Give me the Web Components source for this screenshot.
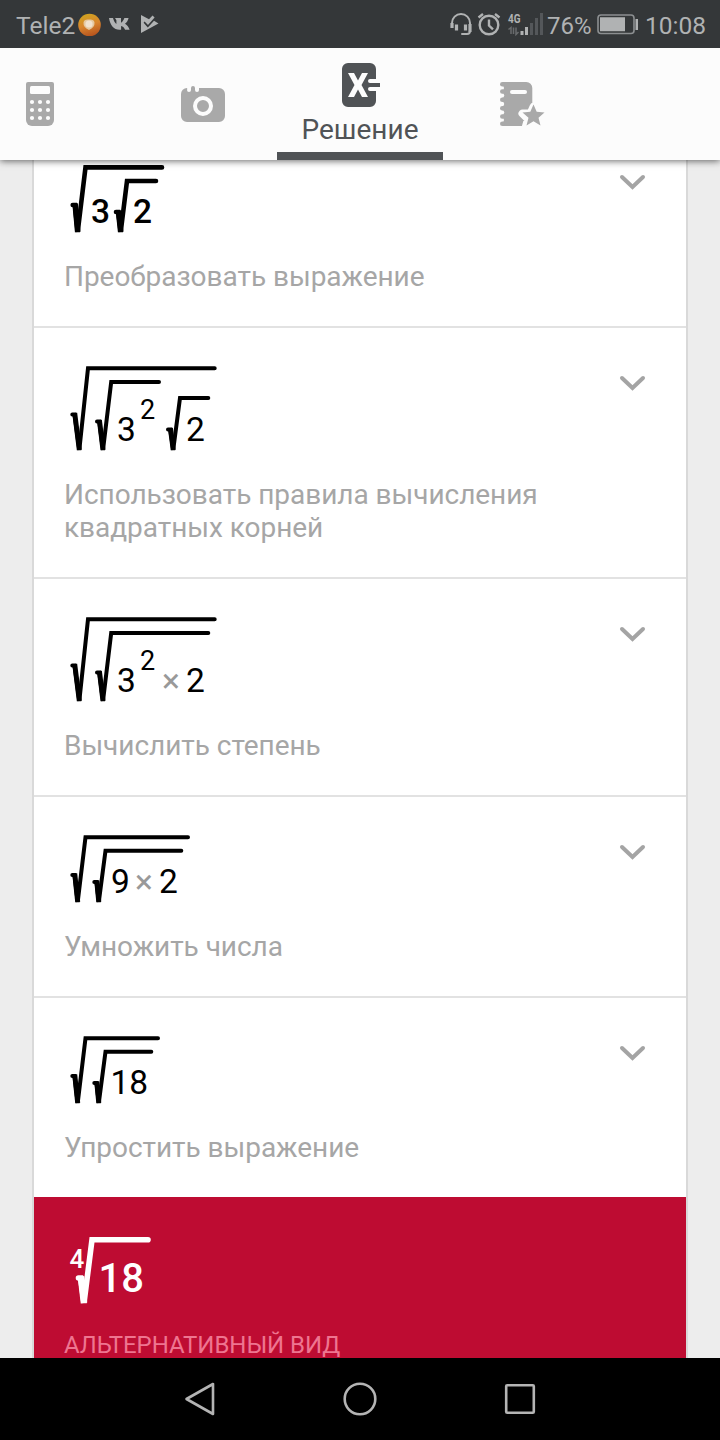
<!DOCTYPE html>
<html lang="ru">
<head>
<meta charset="utf-8">
<title>Решение</title>
<style>
  html, body {
    margin: 0;
    height: 100%;
    overflow: hidden;
  }
  body {
    font-family: Roboto, "Noto Sans", sans-serif;
    background: #ededed;
  }
</style>
</head>
<body>
<solver-app></solver-app>

<script>
class StatusBar extends HTMLElement {
  constructor() {
    super();
    this.attachShadow({ mode: 'open' });
  }

  connectedCallback() {
    this.shadowRoot.innerHTML = `
      <style>
        :host {
          display: flex;
          align-items: center;
          box-sizing: border-box;
          height: 48px;
          padding: 0 15px 0 16px;
          position: relative;
          z-index: 3;
          background: #343739;
          color: #b0b2b3;
          font-size: 24px;
          line-height: 48px;
        }
        svg { display: block; flex: none; }
        span { flex: none; white-space: nowrap; padding-top: 3px; }
        .carrier { width: 61px; font-size: 24.5px; }
        .vk { margin-left: 8px; }
        .play { margin-left: 11px; }
        .alarm { margin-left: 5px; }
        .signal { margin-left: 6px; }
        .percent { width: 47px; margin-left: 3px; }
        .battery { margin-left: 3px; }
        .right { display: flex; align-items: center; margin-left: auto; width: 255px; }
        .time { margin-left: 6px; font-size: 24.5px; }
      </style>
      <span class="carrier">Tele2</span>
      <svg width="24" height="24" viewBox="0 0 24 24">
        <defs>
          <linearGradient id="ball" x1="0.3" y1="0" x2="0.6" y2="1">
            <stop offset="0" stop-color="#cfa41f"/>
            <stop offset="0.5" stop-color="#d9852e"/>
            <stop offset="1" stop-color="#b5521d"/>
          </linearGradient>
        </defs>
        <circle cx="12.500" cy="13" r="11.300" fill="url(#ball)"/>
        <path d="M12 18 Q6 15 6.500 10.500 Q7 7 12 7.500 Q17 7 17.500 10.500 Q18 15 12 18Z" fill="#e5c8a0"/>
        <circle cx="12" cy="12" r="3.600" fill="#f1e2cf"/>
      </svg>
      <svg class="vk" width="21" height="14" viewBox="0 0 21 14">
        <path d="M0 1h4c.8 3 2 5 3.400 6V3.200L6 1h6v4.800C13.500 5 14.600 3 15.400 1h4.200c-.6 2.600-2 4.500-3.600 5.800 1.800 1 3.700 3.200 4.600 5.900h-4.500c-.8-2-2-3.400-4-3.800v3.800h-1.700C5 12.700 1.200 8.500 0 1z" fill="#b0b2b3"/>
      </svg>
      <svg class="play" width="18" height="20" viewBox="0 0 18 20">
        <path d="M0 1 L8 5.200 L11.500 1.500 L13.600 3.600 L7 11 L3.600 7.500 L2.600 8.800 L6.800 13.500 L13 6.800 L17.500 9.500 L0 19Z" fill="#b0b2b3"/>
      </svg>
      <div class="right">
        <svg width="22" height="24" viewBox="0 0 22 24" fill="none" stroke="#b0b2b3" stroke-width="2">
          <path d="M2 15V11a9 9 0 0 1 18 0v8a3 3 0 0 1-3 3h-5" stroke-linecap="round"/>
          <path d="M2 11v5M6.500 12.500v6M15.500 12.500v6M20 12v8" stroke-width="3.200"/>
        </svg>
        <svg class="alarm" width="24" height="24" viewBox="0 0 24 24" fill="none" stroke="#b0b2b3" stroke-width="2.400">
          <circle cx="12" cy="13" r="9.300"/>
          <path d="M12 7.500v6l4 3.800M1.500 5.500 6 2M22.500 5.500 18 2"/>
        </svg>
        <svg class="signal" width="37" height="24" viewBox="0 0 37 24">
          <text x="1" y="11" font-size="13" font-weight="700" fill="#b0b2b3" textLength="12.500" lengthAdjust="spacingAndGlyphs">4G</text>
          <path d="M1.500 17.500 4 15.500V22M6.500 15.500V22M9 15.500V22.500L11.500 20" fill="none" stroke="#686b6d" stroke-width="1.500"/>
          <path d="M13.500 19h3v4h-3zM18 15h3v8h-3z" fill="#b0b2b3"/>
          <path d="M23 11h3v12h-3zM28 6h3v17h-3zM33 1h3v22h-3z" fill="#54575a"/>
        </svg>
        <span class="percent">76%</span>
        <svg class="battery" width="42" height="22" viewBox="0 0 42 22">
          <rect x="1" y="2" width="36" height="18.500" rx="3" fill="none" stroke="#8c8f91" stroke-width="1.600"/>
          <path d="M3 4.200h25v14H3zM38.500 6h2.500v11h-2.500z" fill="#b0b2b3"/>
        </svg>
        <span class="time">10:08</span>
      </div>
    `;
  }
}

class TabBar extends HTMLElement {
  constructor() {
    super();
    this.attachShadow({ mode: 'open' });
  }

  connectedCallback() {
    this.shadowRoot.innerHTML = `
      <style>
        :host {
          display: flex;
          height: 112px;
          position: relative;
          z-index: 2;
          background: #fcfcfc;
          box-shadow: 0 1px 7px rgba(0, 0, 0, 0.6);
        }
        ::slotted(tab-item) { flex: none; }
      </style>
      <slot></slot>
    `;
  }
}

class TabItem extends HTMLElement {
  constructor() {
    super();
    this.attachShadow({ mode: 'open' });
  }

  connectedCallback() {
    this.shadowRoot.innerHTML = `
      <style>
        :host {
          display: flex;
          flex-direction: column;
          align-items: center;
          justify-content: center;
          box-sizing: border-box;
          height: 112px;
          color: #a9a9a9;
        }
        :host([active]) {
          justify-content: flex-start;
          padding-top: 14px;
          border-bottom: 8px solid #505356;
          color: #505356;
          font-size: 28px;
          line-height: 34px;
        }
        ::slotted(svg) { display: block; }
        ::slotted(span) { margin-top: 5px; white-space: nowrap; }
      </style>
      <slot></slot>
    `;
  }
}

// Draws nested radicals. A root is [hookX, hookY, bottomX, bottomY, topX, topY, endX],
// a text is [string, x, baseline, size, fill].
class MathFormula extends HTMLElement {
  constructor() {
    super();
    this.attachShadow({ mode: 'open' });
  }

  set data(value) {
    this._data = value;
    this._render();
  }

  _root([hx, hy, bx, by, tx, ty, ex]) {
    // the short downstroke is heavier than the rest of the sign
    return `
      <path d="M${hx} ${hy}h2.200L${bx} ${by}L${tx} ${ty}H${ex}"/>
      <path class="down" d="M${hx + 2.4} ${hy - 1.5}L${bx} ${by}"/>
    `;
  }

  _render() {
    const { height, stroke = 4, weight = 400, roots, texts } = this._data;
    this.shadowRoot.innerHTML = `
      <style>
        :host { display: block; height: ${height}px; }
        svg { display: block; overflow: visible; }
        path { fill: none; stroke: currentColor; stroke-width: ${stroke}; stroke-linecap: round; }
        .down { stroke-width: ${stroke + 1}; stroke-linecap: butt; }
        text { font-weight: ${weight}; }
      </style>
      <svg width="200" height="${height}">
        ${roots.map((r) => this._root(r)).join('')}
        ${texts.map(([str, x, y, size = 33.5, fill = 'currentColor']) =>
          `<text x="${x}" y="${y}" font-size="${size}" fill="${fill}">${str}</text>`).join('')}
      </svg>
    `;
  }
}

class SolutionStep extends HTMLElement {
  constructor() {
    super();
    this.attachShadow({ mode: 'open' });
    this.shadowRoot.innerHTML = `
      <style>
        :host {
          display: flex;
          justify-content: space-between;
          align-items: flex-start;
          box-sizing: border-box;
          padding: 38px 39px 33px 30px;
          border-bottom: 2px solid #e2e2e2;
          background: #fff;
          color: #000;
        }
        :host([last]) { padding-bottom: 33px; border-bottom: 0; }
        :host([result]) {
          border: 0;
          padding-top: 39px;
          background: #be0c32;
          color: #fff;
        }
        .body { display: flex; flex-direction: column; gap: 28px; }
        .label {
          width: 520px;
          font-size: 28px;
          line-height: 33px;
          letter-spacing: -0.04px;
          color: #a6a6a6;
        }
        :host([result]) .label { font-size: 24px; color: #ee7590; }
        :host([result]) .body { gap: 26px; }
        svg { display: block; margin-top: 7px; }
        :host([result]) svg { display: none; }
      </style>
      <div class="body">
        <slot name="formula"></slot>
        <div class="label"><slot></slot></div>
      </div>
      <svg width="30" height="20" viewBox="0 0 30 20">
        <path d="M5 5 15.500 15 26 5" fill="none" stroke="#a4a4a4" stroke-width="4" stroke-linecap="round"/>
      </svg>
    `;
  }
}

class SystemNav extends HTMLElement {
  constructor() {
    super();
    this.attachShadow({ mode: 'open' });
  }

  connectedCallback() {
    this.shadowRoot.innerHTML = `
      <style>
        :host {
          display: flex;
          justify-content: center;
          align-items: center;
          gap: 124px;
          height: 82px;
          background: #000;
        }
        svg { fill: none; stroke: #b4b4b4; stroke-width: 2.600; stroke-linejoin: round; }
      </style>
      <svg width="36" height="36"><path d="M31 3V33L4.500 18Z"/></svg>
      <svg width="36" height="36"><circle cx="18" cy="18" r="15.300"/></svg>
      <svg width="36" height="36"><rect x="4.200" y="4.200" width="27.600" height="27.600" rx="1"/></svg>
    `;
  }
}

const TIMES = '#999';

const STEPS = [
  {
    label: 'Преобразовать выражение',
    formula: {
      height: 67, stroke: 4.6, weight: 500,
      roots: [[8.7, 40, 13.7, 67, 21.5, 2.4, 98], [52, 47, 56.7, 67, 63, 16, 92]],
      texts: [['3', 27, 58], ['2', 69, 58]],
    },
  },
  {
    label: 'Использовать правила вычисления квадратных корней',
    formula: {
      height: 84,
      roots: [
        [8.3, 48.5, 15.3, 84, 24, 2.2, 150.7],
        [33, 55.5, 39, 84, 47.2, 16, 95],
        [104, 63.5, 109.2, 84, 116, 32, 144.3],
      ],
      texts: [['3', 53, 75], ['2', 76, 53, 27], ['2', 122, 75]],
    },
  },
  {
    label: 'Вычислить степень',
    formula: {
      height: 84,
      roots: [[8.3, 48.5, 15.3, 84, 24, 2.2, 150.7], [33, 55.5, 39, 84, 47.2, 16, 144.3]],
      texts: [['3', 53, 75], ['2', 76, 53, 27], ['×', 98, 75, 33.5, TIMES], ['2', 122, 75]],
    },
  },
  {
    label: 'Умножить числа',
    formula: {
      height: 67,
      roots: [[8.3, 40, 13.7, 67, 21.5, 2.2, 124], [30.3, 47, 34.8, 67, 41.5, 15.8, 117.3]],
      texts: [['9', 47, 58], ['×', 71, 58, 33.5, TIMES], ['2', 95, 58]],
    },
  },
  {
    label: 'Упростить выражение',
    last: true,
    formula: {
      height: 67,
      roots: [[8.3, 40, 13.7, 67, 21.5, 2.2, 94], [30.3, 47, 34.8, 67, 41.5, 15.8, 87.3]],
      texts: [['18', 46.5, 58]],
    },
  },
  {
    label: 'АЛЬТЕРНАТИВНЫЙ ВИД',
    result: true,
    formula: {
      height: 67, stroke: 5.6, weight: 500,
      roots: [[14.5, 42, 20, 67, 28, 3.8, 84]],
      texts: [['4', 5.5, 32, 26], ['18', 34.5, 55.5, 40]],
    },
  },
];

class SolverApp extends HTMLElement {
  constructor() {
    super();
    this.attachShadow({ mode: 'open' });
  }

  connectedCallback() {
    this.shadowRoot.innerHTML = `
      <style>
        :host {
          display: flex;
          flex-direction: column;
          width: 720px;
          height: 1440px;
          overflow: hidden;
        }
        status-bar, tab-bar, system-nav { flex: none; }
        .calc { width: 80px; }
        .camera { width: 148px; margin-left: 49px; }
        .solution { width: 166px; }
        .notes { width: 158px; }
        main {
          flex: 1;
          min-height: 0;
          overflow: hidden;
          background: #ededed;
        }
        /* the list is scrolled a little under the tabs */
        .card {
          width: 652px;
          margin: -33px auto 0;
          border: solid #d9d9d9;
          border-width: 0 2px;
        }
      </style>
      <status-bar></status-bar>
      <tab-bar>
        <tab-item class="calc">
          <svg width="28" height="44" viewBox="0 0 28 44">
            <path d="M2 0h24a2 2 0 0 1 2 2v36a6 6 0 0 1-6 6H6a6 6 0 0 1-6-6V2a2 2 0 0 1 2-2z" fill="#a9a9a9"/>
            <g fill="#fcfcfc">
              <rect x="4" y="4" width="20" height="8" rx="1.500"/>
              <circle cx="6" cy="20" r="2.100"/><circle cx="14" cy="20" r="2.100"/><circle cx="22" cy="20" r="2.100"/>
              <circle cx="6" cy="28" r="2.100"/><circle cx="14" cy="28" r="2.100"/><circle cx="22" cy="28" r="2.100"/>
              <circle cx="6" cy="36" r="2.100"/><circle cx="14" cy="36" r="2.100"/><circle cx="22" cy="36" r="2.100"/>
            </g>
          </svg>
        </tab-item>
        <tab-item class="camera">
          <svg width="44" height="36" viewBox="0 0 44 36">
            <path d="M6 2a2 2 0 0 1 0 2a2 2 0 0 0 4 0V2a2 2 0 0 1 4 0v2a2 2 0 0 0 4 0V2h20a6 6 0 0 1 6 6v22a6 6 0 0 1-6 6H6a6 6 0 0 1-6-6V8a6 6 0 0 1 6-6z" fill="#a9a9a9"/>
            <circle cx="22" cy="20" r="8" fill="none" stroke="#fcfcfc" stroke-width="4"/>
          </svg>
        </tab-item>
        <tab-item class="solution" active>
          <svg width="40" height="46" viewBox="-1 0 40 46">
            <path d="M7 1h22a6 6 0 0 1 6 6v10h-6a2 2 0 0 0 0 4h10a2 2 0 0 1 0 4H29a2 2 0 0 0 0 4h6v10a6 6 0 0 1-6 6H7a6 6 0 0 1-6-6V7a6 6 0 0 1 6-6z" fill="#505356"/>
            <path d="M7 11h6l4 7.500 4-7.500h6l-6.500 12L27 35h-6l-4-7.500L13 35H7l6.500-12z" fill="#fcfcfc"/>
          </svg>
          <span>Решение</span>
        </tab-item>
        <tab-item class="notes">
          <svg width="46" height="46" viewBox="0 0 46 46">
            <path d="M3.300 1h24a6 6 0 0 1 6 6v38h-30z" fill="#a9a9a9"/>
            <g fill="#fcfcfc">
              <circle cx="3" cy="7" r="2"/><circle cx="3" cy="14.500" r="2.200"/><circle cx="3" cy="23" r="2.200"/>
              <circle cx="3" cy="31.500" r="2.200"/><circle cx="3" cy="39" r="2"/>
            </g>
            <g fill="#a9a9a9">
              <circle cx="3.300" cy="10.500" r="2.300"/><circle cx="3.300" cy="18.800" r="2.300"/>
              <circle cx="3.300" cy="27.200" r="2.300"/><circle cx="3.300" cy="35.500" r="2.300"/>
              <circle cx="3.300" cy="3.300" r="2.300"/><circle cx="3.300" cy="42.700" r="2.300"/>
            </g>
            <path d="M13 11h13" stroke="#fcfcfc" stroke-width="4" stroke-linecap="round"/>
            <path d="M34.500 26l3 6.500h7l-5 5 2 8-7-3.500-8 5 2.500-9-5.500-5.500h8z" fill="#a9a9a9" stroke="#fcfcfc" stroke-width="8" stroke-linejoin="round"/>
            <path d="M34.500 23.500l3.200 7.300 7.800.7-6 5.200 2 7.800-7-4.200-7 4.200 2-7.800-6-5.200 7.800-.7z" fill="#a9a9a9"/>
          </svg>
        </tab-item>
      </tab-bar>
      <main><div class="card"></div></main>
      <system-nav></system-nav>
    `;

    const card = this.shadowRoot.querySelector('.card');
    STEPS.forEach((step) => {
      const el = document.createElement('solution-step');
      if (step.last) el.setAttribute('last', '');
      if (step.result) el.setAttribute('result', '');

      const formula = document.createElement('math-formula');
      formula.slot = 'formula';
      formula.data = step.formula;

      el.append(formula, step.label);
      card.appendChild(el);
    });
  }
}

customElements.define('status-bar', StatusBar);
customElements.define('tab-bar', TabBar);
customElements.define('tab-item', TabItem);
customElements.define('math-formula', MathFormula);
customElements.define('solution-step', SolutionStep);
customElements.define('system-nav', SystemNav);
customElements.define('solver-app', SolverApp);
</script>
</body>
</html>
